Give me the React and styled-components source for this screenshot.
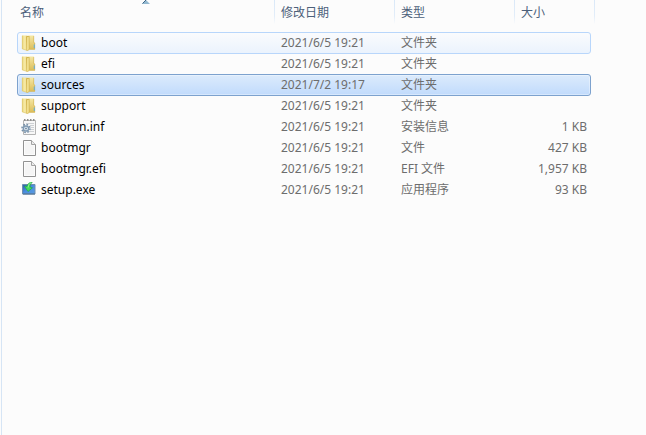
import { useState } from "react";
import styled, { createGlobalStyle } from "styled-components";

const GlobalStyle = createGlobalStyle`
  body {
    margin: 0;
    background: #fcfcfc;
  }
`;

const Pane = styled.main`
  box-sizing: border-box;
  min-height: 100vh;
  margin-left: 1px;
  padding: 0 55px 0 15px;
  border-left: 1px solid #d6e5f5;
  font-family: "Noto Sans", "Noto Sans CJK SC", sans-serif;
  font-size: 12px;
  line-height: 20px;
  color: #6d6d6d;
`;

const FileTable = styled.table`
  display: block;
`;

const Head = styled.thead`
  display: block;
  margin-right: -4px;
  margin-bottom: 6px;
`;

const Body = styled.tbody`
  display: block;
`;

const HeadRow = styled.tr`
  display: grid;
  grid-template-columns: minmax(120px, 1fr) 120px 120px 80px;
  height: 26px;
`;

const HeadCell = styled.th`
  position: relative;
  padding: 0;
  border-right: 1px solid;
  border-image: linear-gradient(#d9e8f8, #e2edf9 60%, #fcfcfc 90%) 1;
`;

const HeadButton = styled.button`
  display: block;
  width: 100%;
  height: 26px;
  padding: 0 0 0 ${(props) => (props.$first ? "3px" : "6px")};
  border: none;
  background: none;
  font: inherit;
  font-weight: 400;
  text-align: left;
  color: #4c607a;
`;

const SortArrow = styled.svg`
  position: absolute;
  top: 0;
  left: 50%;
  width: 8px;
  height: 4px;
  transform: translateX(-50%);
`;

const Row = styled.tr`
  display: grid;
  grid-template-columns: minmax(120px, 1fr) 120px 120px 76px;
  margin-bottom: -1px;
  border: 1px solid transparent;
  border-radius: 3px;

  ${(props) =>
    props.$state === "hover" &&
    `
    border-color: #b8d6fb;
    background: linear-gradient(#fafbfd, #ebf3fd);
  `}
  ${(props) =>
    props.$state === "selected" &&
    `
    border-color: #7da2ce;
    background: linear-gradient(#dcebfc, #c1dbfc);
    box-shadow: inset 0 0 0 1px rgba(255, 255, 255, 0.35);
  `}
`;

const Cell = styled.td`
  padding: 0 3px 0 7px;
  white-space: nowrap;
  text-align: ${(props) => props.$align || "left"};
`;

const NameCell = styled(Cell)`
  display: flex;
  align-items: center;
  gap: 4px;
  padding-left: 3px;
  color: #000;
`;

const Icon = styled.svg`
  flex: none;
  width: 16px;
  height: 16px;
`;

function FolderIcon() {
  return (
    <Icon viewBox="0 0 16 16" aria-hidden="true">
      <defs>
        <linearGradient id="flap" x1="0" x2="1">
          <stop offset="0" stopColor="#ead77f" />
          <stop offset="0.5" stopColor="#f7eaa6" />
          <stop offset="1" stopColor="#ecd985" />
        </linearGradient>
        <linearGradient id="back" x1="0" x2="0" y2="1">
          <stop offset="0" stopColor="#f5e8a6" />
          <stop offset="1" stopColor="#dcbd58" />
        </linearGradient>
      </defs>
      <path d="M7 .5h6V7l1 1v6.500H7z" fill="url(#back)" />
      <path d="M12.700 1v6.200l1 1V14.300H9" fill="none" stroke="#d0b050" strokeWidth=".6" />
      <path d="M1 .5h5.500V15.500L1 14z" fill="url(#flap)" />
      <path d="M5 1.500l1-.5h2.500v14L5.500 16z" fill="#d3b550" />
      <path d="M6 2.200l1.800-.5v12.800L6 15.200z" fill="#f1df8e" />
      <path d="M1.300 .8V13.900l4 1.300" fill="none" stroke="#dcc468" strokeWidth=".6" />
      <path d="M13.300 9.500v3.500" stroke="#5fb0dc" />
    </Icon>
  );
}

function PageIcon() {
  return (
    <Icon viewBox="0 0 16 16" aria-hidden="true">
      <path d="M2.500.5h8l4 4v11h-12z" fill="#fcfcfc" stroke="#929292" />
      <path d="M4 2h6v3.500h3V14H4z" fill="#f5f5f5" />
      <path d="M10.500.5v4h4" fill="#ececec" stroke="#a3a3a3" />
    </Icon>
  );
}

function SetupInfoIcon() {
  return (
    <Icon viewBox="0 0 16 16" aria-hidden="true">
      <path d="M2.500 1.500h12v14h-12z" fill="#f7f7f7" stroke="#b4b4b4" />
      <path d="M3 1h12" stroke="#8d8d8d" strokeWidth="2" strokeDasharray="1.500 1.500" />
      <path d="M5 4.500h8M9 6.500h4M10 8.500h3M10 10.500h3M8 12.500h5" stroke="#cdd0d3" />
      <circle cx="5" cy="9.500" r="4" fill="none" stroke="#7890a8" strokeWidth="1.600" strokeDasharray="1.600 1.540" />
      <circle cx="5" cy="9.500" r="2.600" fill="#eef3f7" stroke="#7f9ab3" strokeWidth="1.500" />
      <circle cx="5" cy="9.500" r=".9" fill="#667f98" />
    </Icon>
  );
}

function SetupIcon() {
  return (
    <Icon viewBox="0 0 16 16" aria-hidden="true">
      <defs>
        <linearGradient id="screen" x2="1" y2="1">
          <stop offset="0" stopColor="#2c5cab" />
          <stop offset="0.5" stopColor="#4b8fdf" />
          <stop offset="1" stopColor="#5a9be2" />
        </linearGradient>
      </defs>
      <path d="M1.500 2.500h12.500v9.500H1.500z" fill="url(#screen)" stroke="#6e8fae" />
      <path d="M2 12h12" stroke="#4f6f90" />
      <path d="M11.500 0C8.800 0 6.500 1.500 6 4.500L3.300 4 7 9.500 11.500 5.800 9 5C9 2.800 10 1.300 11.500 0z" fill="#45dc5b" stroke="#1ba043" strokeWidth=".6" />
      <path d="M10 .8C8.300 1.600 7.400 3 7.200 5.500" fill="none" stroke="#a4f5a0" strokeWidth=".8" />
    </Icon>
  );
}

const icons = {
  folder: FolderIcon,
  page: PageIcon,
  info: SetupInfoIcon,
  setup: SetupIcon,
};

const columns = ["名称", "修改日期", "类型", "大小"];

const files = [
  { name: "boot", icon: "folder", date: "2021/6/5 19:21", type: "文件夹", size: "" },
  { name: "efi", icon: "folder", date: "2021/6/5 19:21", type: "文件夹", size: "" },
  { name: "sources", icon: "folder", date: "2021/7/2 19:17", type: "文件夹", size: "" },
  { name: "support", icon: "folder", date: "2021/6/5 19:21", type: "文件夹", size: "" },
  { name: "autorun.inf", icon: "info", date: "2021/6/5 19:21", type: "安装信息", size: "1 KB" },
  { name: "bootmgr", icon: "page", date: "2021/6/5 19:21", type: "文件", size: "427 KB" },
  { name: "bootmgr.efi", icon: "page", date: "2021/6/5 19:21", type: "EFI 文件", size: "1,957 KB" },
  { name: "setup.exe", icon: "setup", date: "2021/6/5 19:21", type: "应用程序", size: "93 KB" },
];

function App() {
  const [hovered, setHovered] = useState("boot");
  const [selected, setSelected] = useState("sources");

  const rowState = (name) => {
    if (name === selected) return "selected";
    if (name === hovered) return "hover";
    return "";
  };

  return (
    <>
      <GlobalStyle />
      <Pane>
        <FileTable cellSpacing="0">
          <Head>
            <HeadRow>
              {columns.map((column, index) => (
                <HeadCell key={column} scope="col">
                  <HeadButton type="button" $first={index === 0}>
                    {column}
                  </HeadButton>
                  {index === 0 && (
                    <SortArrow viewBox="0 0 8 4" aria-hidden="true">
                      <path d="M4 0L8 4H0z" fill="#92b8d0" />
                      <path d="M4 0L.5 3.500" stroke="#3d6484" />
                    </SortArrow>
                  )}
                </HeadCell>
              ))}
            </HeadRow>
          </Head>
          <Body>
            {files.map((file) => {
              const FileIcon = icons[file.icon];
              return (
                <Row
                  key={file.name}
                  $state={rowState(file.name)}
                  onMouseEnter={() => setHovered(file.name)}
                  onClick={() => setSelected(file.name)}
                >
                  <NameCell>
                    <FileIcon />
                    {file.name}
                  </NameCell>
                  <Cell>{file.date}</Cell>
                  <Cell>{file.type}</Cell>
                  <Cell $align="right">{file.size}</Cell>
                </Row>
              );
            })}
          </Body>
        </FileTable>
      </Pane>
    </>
  );
}

export default App;
